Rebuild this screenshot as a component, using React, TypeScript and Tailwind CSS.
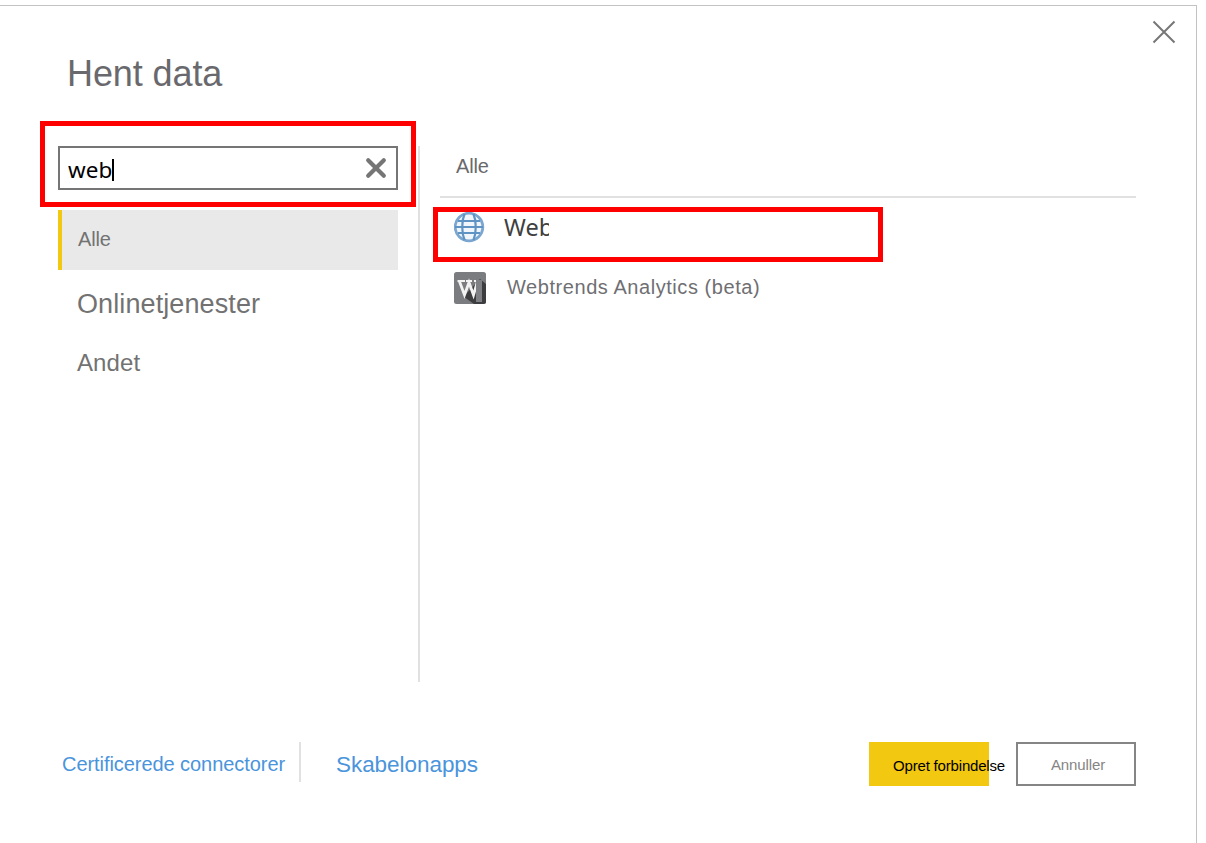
const sans = "font-['Liberation_Sans',sans-serif]";

function CloseIcon() {
  return (
    <svg width="24" height="24" viewBox="0 0 24 24" fill="none" stroke="#777" strokeWidth="2">
      <path d="M1.5 1.5 22.5 22.5M22.5 1.5 1.5 22.5" />
    </svg>
  );
}

function ClearIcon() {
  return (
    <svg width="22" height="22" viewBox="0 0 22 22" fill="none" stroke="#757575" strokeWidth="4.2" strokeLinecap="round">
      <path d="M3.2 3.2 18.8 18.8M18.8 3.2 3.2 18.8" />
    </svg>
  );
}

function GlobeIcon() {
  return (
    <svg width="32" height="32" viewBox="0 0 32 32" fill="none" stroke="#5f93c4" strokeWidth="2">
      <circle cx="15" cy="15" r="13.8" fill="#f0f6fb" stroke="#7ba6cf" strokeWidth="2.8" />
      <path d="M10.500 2C7.500 9 7.500 21 10.500 28M19.500 2C22.500 9 22.500 21 19.500 28" strokeWidth="2.2" />
      <path d="M1 15h28M4 9h22M4 21h22" strokeWidth="2.2" />
    </svg>
  );
}

function WebtrendsIcon() {
  return (
    <svg width="32" height="32" viewBox="0 0 32 32">
      <rect width="32" height="32" rx="2.5" fill="#7b7c80" />
      <path d="M26 7 32 12V29.5Q32 32 29.5 32H20L9.5 24.500Z" fill="#3d3d3f" />
      <path d="M5.500 9.500 10.500 23 15 10.500 19.500 23 23.500 9.500" fill="none" stroke="#f2f2f2" strokeWidth="2.800" />
      <path d="M3.500 9h7.500M12 9h6M20 9h5" fill="none" stroke="#f2f2f2" strokeWidth="2" />
      <path d="M22 8h6v22h-6Z" fill="#7f8084" />
    </svg>
  );
}

export default function App() {
  return (
    <div className={`h-[843px] w-[1206px] overflow-hidden bg-white pt-[5px] text-[#6f6f73] ${sans}`}>
      <main className="relative h-[838px] w-[1197px] border-t border-r border-[#c3c3c3]">
        <header className="flex h-[140px] items-start justify-between pr-5 pl-[67px]">
          <h1 className="pt-12 text-[36px] leading-10 tracking-[-0.1px] text-[#69696d]">Hent data</h1>
          <button className="mt-3.5" aria-label="Luk">
            <CloseIcon />
          </button>
        </header>

        <div className="flex h-[536px] gap-5 pl-[58px]">
          <aside className="w-[340px]">
            <div className="flex h-11 items-center justify-between border-2 border-[#757575] pr-[9px] pl-2">
              <div className="flex items-center pt-[3px] text-black">
                <span className="font-['Noto_Sans',sans-serif] text-[22.5px] leading-8">web</span>
                <span className="h-[22px] w-0.5 bg-black" />
              </div>
              <ClearIcon />
            </div>
            <nav className="mt-5 text-[#727272]">
              <div className="h-[60px] border-l-4 border-[#f2c811] bg-[#e9e9e9] pt-[17px] pl-4 text-[20px] leading-6 tracking-[-0.2px]">Alle</div>
              <div className="pt-[18px] pl-[19px] text-[27px] leading-8 tracking-[0.1px]">Onlinetjenester</div>
              <div className="pt-[27px] pl-[19px] text-[24px] leading-8 tracking-[0.1px]">Andet</div>
            </nav>
          </aside>
          <div className="w-0.5 bg-[#e1e1e1]" />
          <section className="w-[696px]">
            <h2 className="h-[52px] border-b-2 border-[#e1e1e1] pt-2 pl-4 text-[20px] leading-6 tracking-[-0.2px] text-[#69696d]">Alle</h2>
            <div className="flex h-[74px] items-start pt-[14px] pl-3.5">
              <GlobeIcon />
              <span className="-mt-px ml-[18px] w-[45px] overflow-hidden font-['Noto_Sans',sans-serif] text-[23.5px] leading-8 whitespace-nowrap text-[#404040]">Web</span>
            </div>
            <div className="flex items-start pl-3.5">
              <WebtrendsIcon />
              <span className="ml-[21px] pt-[3px] text-[20px] leading-6 tracking-[0.56px]">Webtrends Analytics (beta)</span>
            </div>
          </section>
        </div>

        <footer className="mt-[60px] flex h-11 items-start justify-between pr-[60px] pl-[62px]">
          <div className="flex items-start text-[#4a94dc]">
            <a className="w-[237px] pt-2.5 text-[20px] leading-6 tracking-[-0.06px] whitespace-nowrap">Certificerede connectorer</a>
            <span className="h-10 w-0.5 bg-[#e1e1e1]" />
            <a className="ml-[35px] pt-[11px] text-[22.5px] leading-6 tracking-[-0.05px]">Skabelonapps</a>
          </div>
          <div className="flex gap-[27px]">
            <button className="h-11 w-[120px] bg-[#f2c811] pt-1 pl-6 text-left text-[15px] tracking-[-0.18px] whitespace-nowrap text-black">Opret forbindelse</button>
            <button className="h-11 w-[120px] border-2 border-[#858585] pt-0.5 pl-1 text-[15px] tracking-[-0.1px] text-[#858585]">Annuller</button>
          </div>
        </footer>

        <div className="pointer-events-none absolute top-[115px] left-10 h-[86px] w-[376px] border-5 border-[#ff0000]" />
        <div className="pointer-events-none absolute top-[201px] left-[433px] h-[55px] w-[450px] border-5 border-[#ff0000]" />
      </main>
    </div>
  );
}
